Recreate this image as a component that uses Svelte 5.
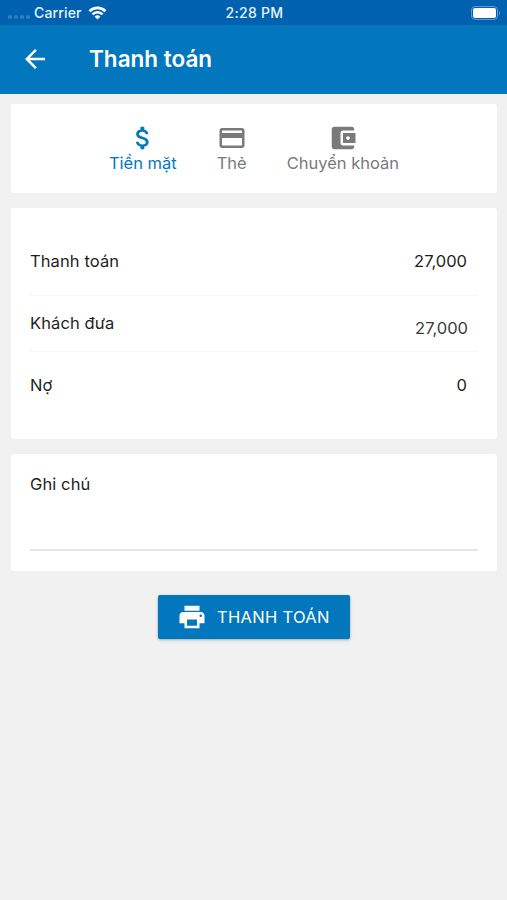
<script>
	const methods = [
		{
			id: "cash",
			label: "Tiền mặt",
			icon: "M11.8 10.9c-2.27-.59-3-1.2-3-2.15 0-1.09 1.01-1.85 2.7-1.85 1.78 0 2.44.85 2.5 2.1h2.21c-.07-1.72-1.12-3.3-3.21-3.81V3h-3v2.16c-1.94.42-3.5 1.68-3.5 3.61 0 2.31 1.91 3.46 4.7 4.13 2.5.6 3 1.48 3 2.41 0 .69-.49 1.79-2.7 1.79-2.06 0-2.87-.92-2.98-2.1h-2.2c.12 2.19 1.76 3.42 3.68 3.83V21h3v-2.15c1.95-.37 3.5-1.5 3.5-3.55 0-2.84-2.43-3.81-4.7-4.4z",
		},
		{
			id: "card",
			label: "Thẻ",
			icon: "M20 4H4c-1.11 0-1.99.89-1.99 2L2 18c0 1.11.89 2 2 2h16c1.11 0 2-.89 2-2V6c0-1.11-.89-2-2-2zm0 14H4v-6h16v6zm0-10H4V6h16v2z",
		},
		{
			id: "transfer",
			label: "Chuyển khoản",
			icon: "M21 18v1c0 1.1-.9 2-2 2H5c-1.11 0-2-.9-2-2V5c0-1.1.89-2 2-2h14c1.1 0 2 .9 2 2v1h-9c-1.11 0-2 .9-2 2v8c0 1.1.89 2 2 2h9zm-9-2h10V8H12v8zm4-2.5c-.83 0-1.5-.67-1.5-1.5s.67-1.5 1.5-1.5 1.5.67 1.5 1.5-.67 1.5-1.5 1.5z",
		},
	];

	let selected = $state("cash");
	let note = $state("");

	const total = 27000;
	let paid = $state(27000);
	let debt = $derived(total - paid);

	function format(amount) {
		return amount.toLocaleString("en-US");
	}
</script>

<div class="screen">
	<div class="status">
		<div class="carrier">
			<span class="signal"><i></i><i></i><i></i><i></i></span>
			<span>Carrier</span>
			<svg class="wifi" viewBox="0 0 18 14">
				<path d="M1 5.2a11.4 11.4 0 0 1 16 0M3.9 8.3a7.2 7.2 0 0 1 10.2 0" />
				<path class="dot" d="M9 13.6 6.1 10.6a4.1 4.1 0 0 1 5.8 0z" />
			</svg>
		</div>
		<span class="time">2:28 PM</span>
		<div class="battery"><span class="level"></span></div>
	</div>

	<header>
		<button class="back" aria-label="Quay lại">
			<svg viewBox="0 0 24 24"><path d="M20 11H7.83l5.59-5.59L12 4l-8 8 8 8 1.41-1.41L7.83 13H20v-2z" /></svg>
		</button>
		<h1>Thanh toán</h1>
	</header>

	<main>
		<section class="card methods">
			{#each methods as method (method.id)}
				<button
					class="method"
					class:active={method.id === selected}
					onclick={() => (selected = method.id)}
				>
					<svg viewBox="0 0 24 24"><path d={method.icon} /></svg>
					<span>{method.label}</span>
				</button>
			{/each}
		</section>

		<section class="card amounts">
			<div class="row total">
				<span>Thanh toán</span>
				<span class="value">{format(total)}</span>
			</div>
			<div class="row paid">
				<span>Khách đưa</span>
				<span class="value entered">{format(paid)}</span>
			</div>
			<div class="row debt">
				<span>Nợ</span>
				<span class="value">{format(debt)}</span>
			</div>
		</section>

		<section class="card note">
			<label for="note">Ghi chú</label>
			<input id="note" type="text" bind:value={note}>
		</section>

		<button class="pay">
			<svg viewBox="0 0 24 24"><path d="M19 8H5c-1.66 0-3 1.34-3 3v6h4v4h12v-4h4v-6c0-1.66-1.34-3-3-3zm-3 11H8v-5h8v5zm3-7c-.55 0-1-.45-1-1s.45-1 1-1 1 .45 1 1-.45 1-1 1zm-1-9H6v4h12V3z" /></svg>
			<span>THANH TOÁN</span>
		</button>
	</main>
</div>

<style>
	:global(body) {
		background-color: #f1f1f1;
	}

	.screen {
		min-height: 900px;
		background-color: #f1f1f1;
		color: #1e1e1e;
		font-family: Inter, Roboto, sans-serif;
		font-size: 16.5px;
		line-height: 20px;
	}

	button {
		margin: 0;
		padding: 0;
		border: none;
		background: none;
		color: inherit;
		font: inherit;
		cursor: pointer;
	}

	svg {
		display: block;
		fill: currentColor;
	}

	.status {
		display: grid;
		grid-template-columns: 1fr auto 1fr;
		align-items: center;
		height: 25px;
		padding: 1px 6px 0 8px;
		box-sizing: border-box;
		background-color: #0062af;
		color: #e8f2fa;
		font-size: 14px;
		font-weight: 500;
	}

	.carrier {
		display: flex;
		align-items: center;
		letter-spacing: 0.15px;
	}

	.time {
		letter-spacing: 0.3px;
	}

	.signal {
		display: flex;
		gap: 2.5px;
		margin: 8px 4.5px 0 0;
	}

	.signal i {
		width: 3.5px;
		height: 3.5px;
		border-radius: 50%;
		background-color: #2c7fc0;
	}

	.wifi {
		width: 19px;
		height: 14px;
		margin-left: 6px;
		fill: none;
		stroke: #fff;
		stroke-width: 2.6;
	}

	.wifi .dot {
		fill: #fff;
		stroke: none;
	}

	.battery {
		position: relative;
		justify-self: end;
		width: 27px;
		height: 14px;
		margin-right: 3px;
		padding: 1px;
		box-sizing: border-box;
		border: 1px solid #5c9bce;
		border-radius: 4px;
	}

	.battery::after {
		content: "";
		position: absolute;
		top: 4px;
		right: -3px;
		width: 1.5px;
		height: 4px;
		border-radius: 0 2px 2px 0;
		background-color: #5c9bce;
	}

	.level {
		display: block;
		height: 100%;
		border-radius: 2px;
		background-color: #fff;
	}

	header {
		display: flex;
		align-items: center;
		height: 69px;
		padding: 0 0 1px 20px;
		box-sizing: border-box;
		background-color: #0277bd;
		color: #fff;
	}

	.back svg {
		width: 30px;
		height: 30px;
	}

	h1 {
		margin: 0 0 0 39px;
		font-size: 22.5px;
		font-weight: 600;
		line-height: 28px;
	}

	main {
		display: flex;
		flex-direction: column;
		padding: 10px 10px 0 11px;
	}

	.card {
		margin-bottom: 15px;
		box-sizing: border-box;
		border-radius: 3px;
		background-color: #fff;
	}

	.methods {
		display: flex;
		justify-content: center;
		gap: 40px;
		height: 89px;
		padding-top: 19px;
	}

	.method {
		display: flex;
		flex-direction: column;
		align-items: center;
		align-self: flex-start;
		color: #7a7a7a;
	}

	.method svg {
		width: 30px;
		height: 30px;
	}

	.method.active {
		color: #0277bd;
	}

	.amounts {
		height: 231px;
		padding: 19px 19px 0;
		letter-spacing: 0.1px;
	}

	.row {
		display: flex;
		justify-content: space-between;
		padding-right: 11px;
		box-sizing: border-box;
		border-bottom: 1px solid #f5f5f5;
	}

	.total {
		height: 69px;
		padding-top: 24px;
	}

	.paid {
		height: 56px;
		padding-top: 17px;
	}

	.debt {
		height: 60px;
		padding-top: 23px;
		border-bottom: none;
	}

	.value {
		letter-spacing: 0;
	}

	.entered {
		padding-top: 5px;
		margin-right: -1px;
		color: #3c3c3c;
	}

	.note {
		display: flex;
		flex-direction: column;
		height: 117px;
		padding: 20px 19px 0;
		letter-spacing: 0.1px;
	}

	.note input {
		height: 57px;
		padding: 0;
		box-sizing: border-box;
		border: none;
		border-bottom: 2px solid #e6e6e6;
		outline: none;
		background: none;
		font: inherit;
	}

	.pay {
		display: flex;
		align-self: center;
		align-items: center;
		gap: 10px;
		width: 192px;
		height: 44px;
		margin-top: 9px;
		padding-left: 19px;
		border-radius: 2px;
		background-color: #0277bd;
		box-shadow: 0 1px 3px rgba(0, 0, 0, 0.3);
		color: #fff;
		letter-spacing: 0.3px;
	}

	.pay svg {
		width: 30px;
		height: 30px;
	}
</style>
